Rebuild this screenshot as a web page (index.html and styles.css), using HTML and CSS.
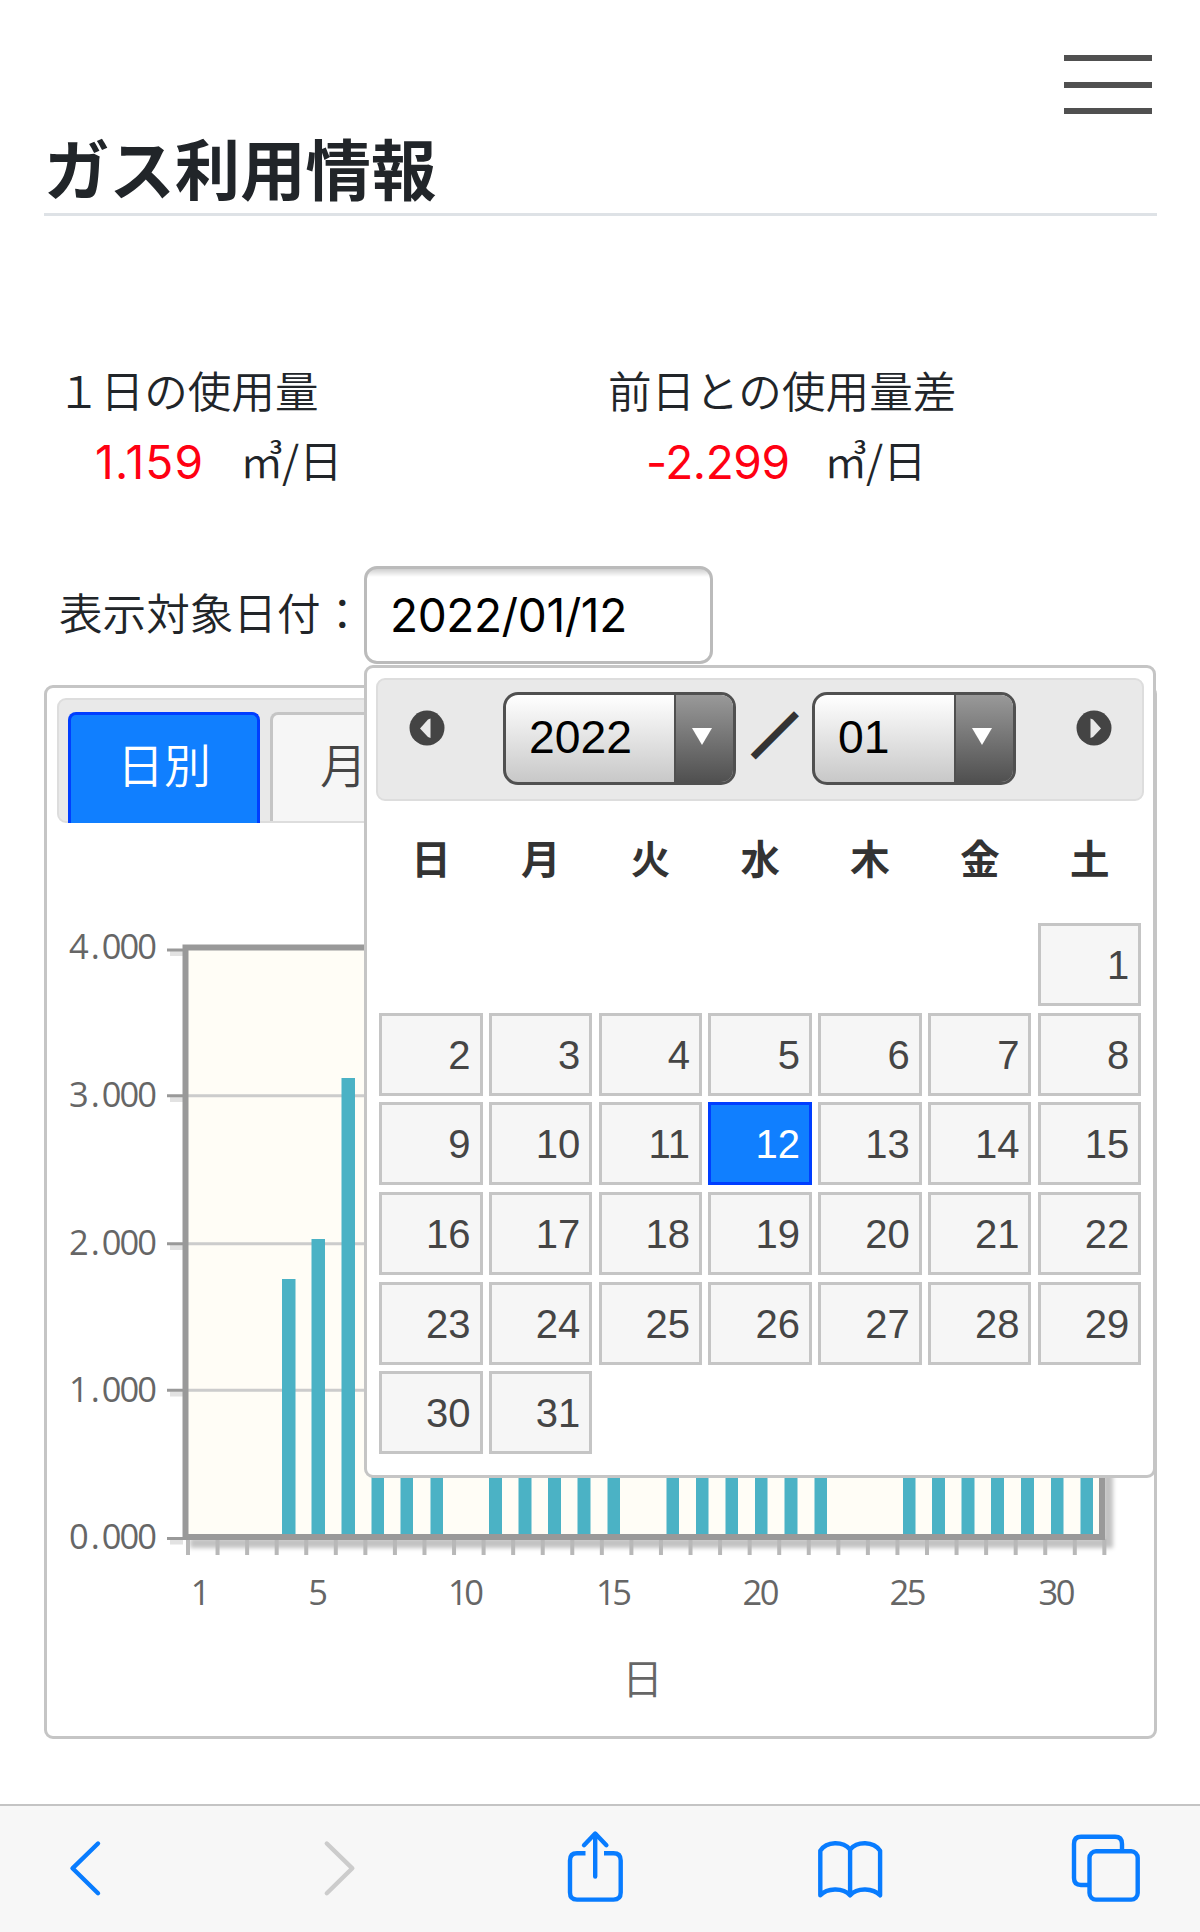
FILE: index.html
```html
<!DOCTYPE html>
<html lang="ja">
<head>
    <meta charset="UTF-8">
    <meta name="viewport" content="width=device-width, initial-scale=1.0">
    <title>ガス利用情報</title>
    <link rel="stylesheet" href="styles.css">
</head>
<body>
    <main class="page">
        <div class="menu-button">
            <span></span>
            <span></span>
            <span></span>
        </div>
        <h1>ガス利用情報</h1>

        <div class="usage">
            <div class="usage-item">
                <div class="usage-label">１日の使用量</div>
                <div class="usage-value"><span class="number">1.159</span><span class="unit">㎥</span><span class="per">/日</span></div>
            </div>
            <div class="usage-item diff">
                <div class="usage-label">前日との使用量差</div>
                <div class="usage-value"><span class="number">-2.299</span><span class="unit">㎥</span><span class="per">/日</span></div>
            </div>
        </div>

        <div class="date-row">
            <label for="target-date">表示対象日付：</label>
            <input type="text" id="target-date" class="date-input" value="2022/01/12">

            <!-- カレンダー -->
            <div class="datepicker">
                <div class="datepicker-header">
                    <svg class="arrow" width="36" height="36" viewBox="0 0 36 36">
                        <circle cx="18" cy="18" r="17.5" fill="#444"/>
                        <path d="M21.5 8.5V28L19 27L11 18.5L19 9.5Z" fill="#e9e9e9"/>
                    </svg>
                    <div class="select year">
                        <span class="select-text">2022</span>
                        <span class="select-arrow"><svg width="20" height="17" viewBox="0 0 20 17"><path d="M0 0H20L10 17Z" fill="#fff"/></svg></span>
                    </div>
                    <span class="slash">／</span>
                    <div class="select month">
                        <span class="select-text">01</span>
                        <span class="select-arrow"><svg width="20" height="17" viewBox="0 0 20 17"><path d="M0 0H20L10 17Z" fill="#fff"/></svg></span>
                    </div>
                    <svg class="arrow next" width="36" height="36" viewBox="0 0 36 36">
                        <circle cx="18" cy="18" r="17.5" fill="#444"/>
                        <path d="M14.5 8.5V28L17 27L25 18.5L17 9.5Z" fill="#e9e9e9"/>
                    </svg>
                </div>
                <div class="weekdays">
                    <span>日</span><span>月</span><span>火</span><span>水</span><span>木</span><span>金</span><span>土</span>
                </div>
                <div class="days">
                    <a class="day first">1</a>
                    <a class="day">2</a>
                    <a class="day">3</a>
                    <a class="day">4</a>
                    <a class="day">5</a>
                    <a class="day">6</a>
                    <a class="day">7</a>
                    <a class="day">8</a>
                    <a class="day">9</a>
                    <a class="day">10</a>
                    <a class="day">11</a>
                    <a class="day active">12</a>
                    <a class="day">13</a>
                    <a class="day">14</a>
                    <a class="day">15</a>
                    <a class="day">16</a>
                    <a class="day">17</a>
                    <a class="day">18</a>
                    <a class="day">19</a>
                    <a class="day">20</a>
                    <a class="day">21</a>
                    <a class="day">22</a>
                    <a class="day">23</a>
                    <a class="day">24</a>
                    <a class="day">25</a>
                    <a class="day">26</a>
                    <a class="day">27</a>
                    <a class="day">28</a>
                    <a class="day">29</a>
                    <a class="day">30</a>
                    <a class="day">31</a>
                </div>
            </div>
        </div>

        <div class="tabs">
            <div class="tab-nav">
                <div class="tab active">日別</div>
                <div class="tab">月別</div>
            </div>
            <svg class="chart" viewBox="47 823 1107 913">
                <defs>
                    <filter id="soft" x="-10%" y="-10%" width="120%" height="120%"><feGaussianBlur stdDeviation="2"/></filter>
                </defs>
                <!-- 影 -->
                <g filter="url(#soft)" fill="none" stroke="#000" stroke-opacity=".24">
                    <path stroke-width="10" d="M190 1543H1108V953"/>
                </g>
                <rect x="185" y="948" width="917" height="589" fill="#fffdf6"/>
                <path class="grid-line" d="M188 1095.7H1099M188 1243.8H1099M188 1390.2H1099"/>
                <!-- 目盛り -->
                <path class="tick-shadow" d="M170 953.500H183M170 1099.500H183M170 1247.500H183M170 1394H183M170 1542H183"/>
                <path class="tick" d="M167 950H184M167 1095.700H184M167 1243.800H184M167 1390.200H184M167 1538.500H184"/>
                <path class="tick-x" stroke-dasharray="4 25.56" d="M186 1547H1107"/>
                <!-- 棒グラフ -->
                <g class="bars">
                    <rect x="282" y="1279" width="13.500" height="257"/>
                    <rect x="311.500" y="1239" width="13.500" height="297"/>
                    <rect x="341.500" y="1078" width="13.500" height="458"/>
                    <rect x="371.500" y="1420" width="12.500" height="116"/>
                    <rect x="400.500" y="1420" width="12.500" height="116"/>
                    <rect x="430.500" y="1420" width="12.500" height="116"/>
                    <rect x="489" y="1420" width="13" height="116"/>
                    <rect x="518.500" y="1420" width="13" height="116"/>
                    <rect x="548" y="1420" width="13" height="116"/>
                    <rect x="577.500" y="1420" width="13" height="116"/>
                    <rect x="607.500" y="1420" width="12.500" height="116"/>
                    <rect x="666.500" y="1420" width="12.500" height="116"/>
                    <rect x="696" y="1420" width="12.500" height="116"/>
                    <rect x="725.500" y="1420" width="12.500" height="116"/>
                    <rect x="755" y="1420" width="12.500" height="116"/>
                    <rect x="784.500" y="1420" width="13" height="116"/>
                    <rect x="814.500" y="1420" width="12.500" height="116"/>
                    <rect x="903" y="1420" width="12.500" height="116"/>
                    <rect x="932" y="1420" width="13" height="116"/>
                    <rect x="961.500" y="1420" width="13" height="116"/>
                    <rect x="991" y="1420" width="13" height="116"/>
                    <rect x="1021" y="1420" width="13" height="116"/>
                    <rect x="1051" y="1420" width="12.500" height="116"/>
                    <rect x="1080.500" y="1420" width="12.500" height="116"/>
                </g>
                <rect class="frame" x="185.500" y="947.500" width="916.500" height="589.500"/>
                <g class="axis-text y-labels" text-anchor="end">
                    <text x="155" y="959" dx="0 4 4">4.000</text>
                    <text x="155" y="1106.500" dx="0 4 4">3.000</text>
                    <text x="155" y="1254.500" dx="0 4 4">2.000</text>
                    <text x="155" y="1401.500" dx="0 4 4">1.000</text>
                    <text x="155" y="1549" dx="0 4 4">0.000</text>
                </g>
                <g class="axis-text" text-anchor="middle">
                    <text x="200.500" y="1604.500">1</text>
                    <text x="318" y="1604.500">5</text>
                    <text x="466" y="1604.500" textLength="36">10</text>
                    <text x="614" y="1604.500" textLength="36">15</text>
                    <text x="761" y="1604.500" textLength="37">20</text>
                    <text x="908" y="1604.500" textLength="37">25</text>
                    <text x="1057" y="1604.500" textLength="37">30</text>
                </g>
                <text class="axis-title" x="642.500" y="1694" text-anchor="middle">日</text>
            </svg>
        </div>
    </main>

    <footer class="toolbar">
        <svg viewBox="51 1829 70 80"><path d="M98 1843.500L72.500 1868.300L98 1893.200"/></svg>
        <svg class="disabled" viewBox="306 1829 70 80"><path d="M326.800 1843.500L352.300 1868.300L326.800 1893.200"/></svg>
        <svg viewBox="561 1829 70 80">
            <path stroke-linecap="butt" d="M585.500 1853.300H577Q570 1853.300 570 1860.500V1892.500Q570 1899.600 577 1899.600H613.500Q620.700 1899.600 620.700 1892.500V1860.500Q620.700 1853.300 613.500 1853.300H604"/>
            <path d="M595.200 1876.500V1834M584 1845.200L595.200 1833.500L606.400 1845.200"/>
        </svg>
        <svg viewBox="815.200 1829 70 80">
            <path d="M850.300 1849.500C843 1841 827 1841 820.500 1850.700V1895.300C827 1888 843 1887 850.300 1895.300C857.500 1887 873.500 1888 880.300 1895.300V1850.700C873.500 1841 857.500 1841 850.300 1849.500V1895.300"/>
        </svg>
        <svg viewBox="1070 1829 70 80">
            <path stroke-linecap="butt" d="M1089 1885H1081Q1074 1885 1074 1878V1844Q1074 1836.800 1081 1836.800H1115Q1122 1836.800 1122 1844V1851"/>
            <rect x="1089.500" y="1851.300" width="48.200" height="48.300" rx="6.500"/>
        </svg>
    </footer>
</body>
</html>
```

FILE: styles.css
```css
* {
    box-sizing: border-box;
}
body {
    display: flex;
    flex-direction: column;
    height: 1932px;
    margin: 0;
    background-color: #fff;
    color: #212529;
    font-family: 'Noto Sans CJK JP', sans-serif;
    font-size: 43.6px;
    font-weight: 350;
    overflow: hidden;
}
.page {
    flex: 1;
    min-height: 0;
    padding: 55px 43px 0 44px;
}
.menu-button {
    display: flex;
    flex-direction: column;
    justify-content: space-between;
    width: 88px;
    height: 59px;
    margin: 0 5px 0 auto;
}
.menu-button span {
    height: 6px;
    background-color: #505050;
}
h1 {
    height: 102px;
    margin: 0;
    padding-top: 10px;
    border-bottom: 3px solid #dee2e6;
    font-size: 65.4px;
    font-weight: 700;
    line-height: 85px;
}

/* 使用量 */
.usage {
    display: grid;
    grid-template-columns: 551px 1fr;
    margin-top: 138px;
    padding-left: 13px;
    line-height: 70px;
}
.usage-item {
    height: 143px;
}
.usage-label {
    height: 70px;
}
.usage-value {
    display: flex;
    height: 70px;
    padding-left: 38px;
}
.usage-value .number {
    width: 145px;
    color: #ff0012;
    font-family: Inter, sans-serif;
    font-size: 46px;
    font-weight: 400;
    letter-spacing: 1.2px;
    line-height: 76px;
}
.diff .usage-value .number {
    width: 178px;
    letter-spacing: -0.4px;
}
.usage-value .unit {
    width: 42px;
}

/* 日付 */
.date-row {
    position: relative;
    display: flex;
    align-items: center;
    height: 98px;
    margin-top: 69px;
    padding-left: 15px;
}
.date-row label {
    width: 305px;
    padding-bottom: 8px;
    white-space: nowrap;
}
.date-input {
    width: 349px;
    height: 98px;
    padding: 0 0 1px 23px;
    border: 3px solid #bbb;
    border-radius: 13px;
    background: linear-gradient(#cfcfcf, #fff 8px);
    color: #000;
    font-family: Inter, sans-serif;
    font-size: 46px;
    letter-spacing: -0.4px;
}
.datepicker {
    position: absolute;
    top: 99px;
    left: 320px;
    z-index: 1;
    width: 792px;
    height: 813px;
    padding: 10px 9px;
    border: 3px solid #c5c5c5;
    border-radius: 9px;
    background-color: #fff;
    color: #333;
}
.datepicker-header {
    display: flex;
    align-items: flex-start;
    height: 123px;
    padding: 12px 0 0 31px;
    border: 2px solid #ddd;
    border-radius: 9px;
    background-color: #e9e9e9;
}
.arrow {
    margin-top: 18px;
}
.select {
    display: flex;
    height: 93px;
    border: 3px solid #505050;
    border-radius: 15px;
    background: linear-gradient(#fff, #c8c8c8);
    color: #000;
    overflow: hidden;
}
.year {
    width: 233px;
    margin-left: 58px;
}
.month {
    width: 204px;
    margin-left: 12px;
}
.select-text {
    flex: 1;
    padding-left: 23px;
    font-family: 'Liberation Sans', sans-serif;
    font-size: 46.3px;
    font-weight: 400;
    line-height: 85px;
}
.select-arrow {
    width: 59px;
    padding: 31px 0 0 16px;
    border-left: 2px solid #505050;
    background: linear-gradient(#999, #505050);
    line-height: 0;
}
.slash {
    width: 47px;
    margin-left: 17px;
    font-weight: 700;
    line-height: 83px;
    -webkit-text-stroke: 5px #333;
}
.next {
    margin-left: 60px;
}
.weekdays {
    display: grid;
    grid-template-columns: repeat(7, 109.8px);
    height: 122px;
    font-size: 39.5px;
    font-weight: 700;
    line-height: 112px;
    text-align: center;
}
.days {
    display: grid;
    grid-template-columns: repeat(7, 103.5px);
    grid-auto-rows: 83px;
    gap: 6.7px 6.3px;
    padding-left: 3px;
}
.day {
    padding-right: 9px;
    border: 3px solid #c5c5c5;
    background-color: #f6f6f6;
    color: #454545;
    font-family: 'Liberation Sans', sans-serif;
    font-size: 40px;
    font-weight: 400;
    line-height: 78px;
    text-align: right;
}
.day.first {
    grid-column: 7;
}
.day.active {
    border-color: #003eff;
    background-color: #107fff;
    color: #fff;
}

/* タブ */
.tabs {
    height: 1054px;
    margin-top: 21px;
    padding: 10px;
    border: 3px solid #c5c5c5;
    border-radius: 9px;
}
.tab-nav {
    display: flex;
    gap: 10px;
    height: 125px;
    padding: 12px 0 0 9px;
    border: 2px solid #ddd;
    border-radius: 9px;
    background-color: #e9e9e9;
}
.tab {
    width: 192px;
    height: 109px;
    padding-left: 2px;
    border: 3px solid #c5c5c5;
    border-bottom: 0;
    border-radius: 8px 8px 0 0;
    background-color: #f6f6f6;
    color: #454545;
    font-size: 47px;
    line-height: 96px;
    text-align: center;
}
.tab.active {
    height: 111px;
    padding-left: 0;
    border-color: #003eff;
    background-color: #107fff;
    color: #fff;
}
.chart {
    display: block;
    width: 1107px;
    height: 913px;
    margin-left: -10px;
}
.grid-line {
    stroke: #ccc;
    stroke-width: 3;
}
.tick {
    stroke: #999;
    stroke-width: 3;
}
.tick-shadow {
    stroke: #e2e2e2;
    stroke-width: 5;
}
.tick-x {
    stroke: #b8b8b8;
    stroke-width: 16;
}
.bars {
    fill: #4bb2c5;
}
.frame {
    fill: none;
    stroke: #999;
    stroke-width: 6;
}
.axis-text {
    fill: #666;
    font-family: 'Open Sans', sans-serif;
    font-size: 34.5px;
    font-weight: 400;
}
.y-labels {
    letter-spacing: -2px;
}
.axis-title {
    fill: #666;
    font-size: 41px;
}

/* ツールバー */
.toolbar {
    display: flex;
    justify-content: space-between;
    align-items: center;
    height: 128px;
    padding: 0 60px 0 51px;
    border-top: 2px solid #c4c4c4;
    background-color: #f7f7f7;
}
.toolbar svg {
    width: 70px;
    height: 80px;
    fill: none;
    stroke: #087cff;
    stroke-width: 4.4;
    stroke-linecap: round;
    stroke-linejoin: round;
}
.toolbar .disabled {
    stroke: #ccc;
}
```
